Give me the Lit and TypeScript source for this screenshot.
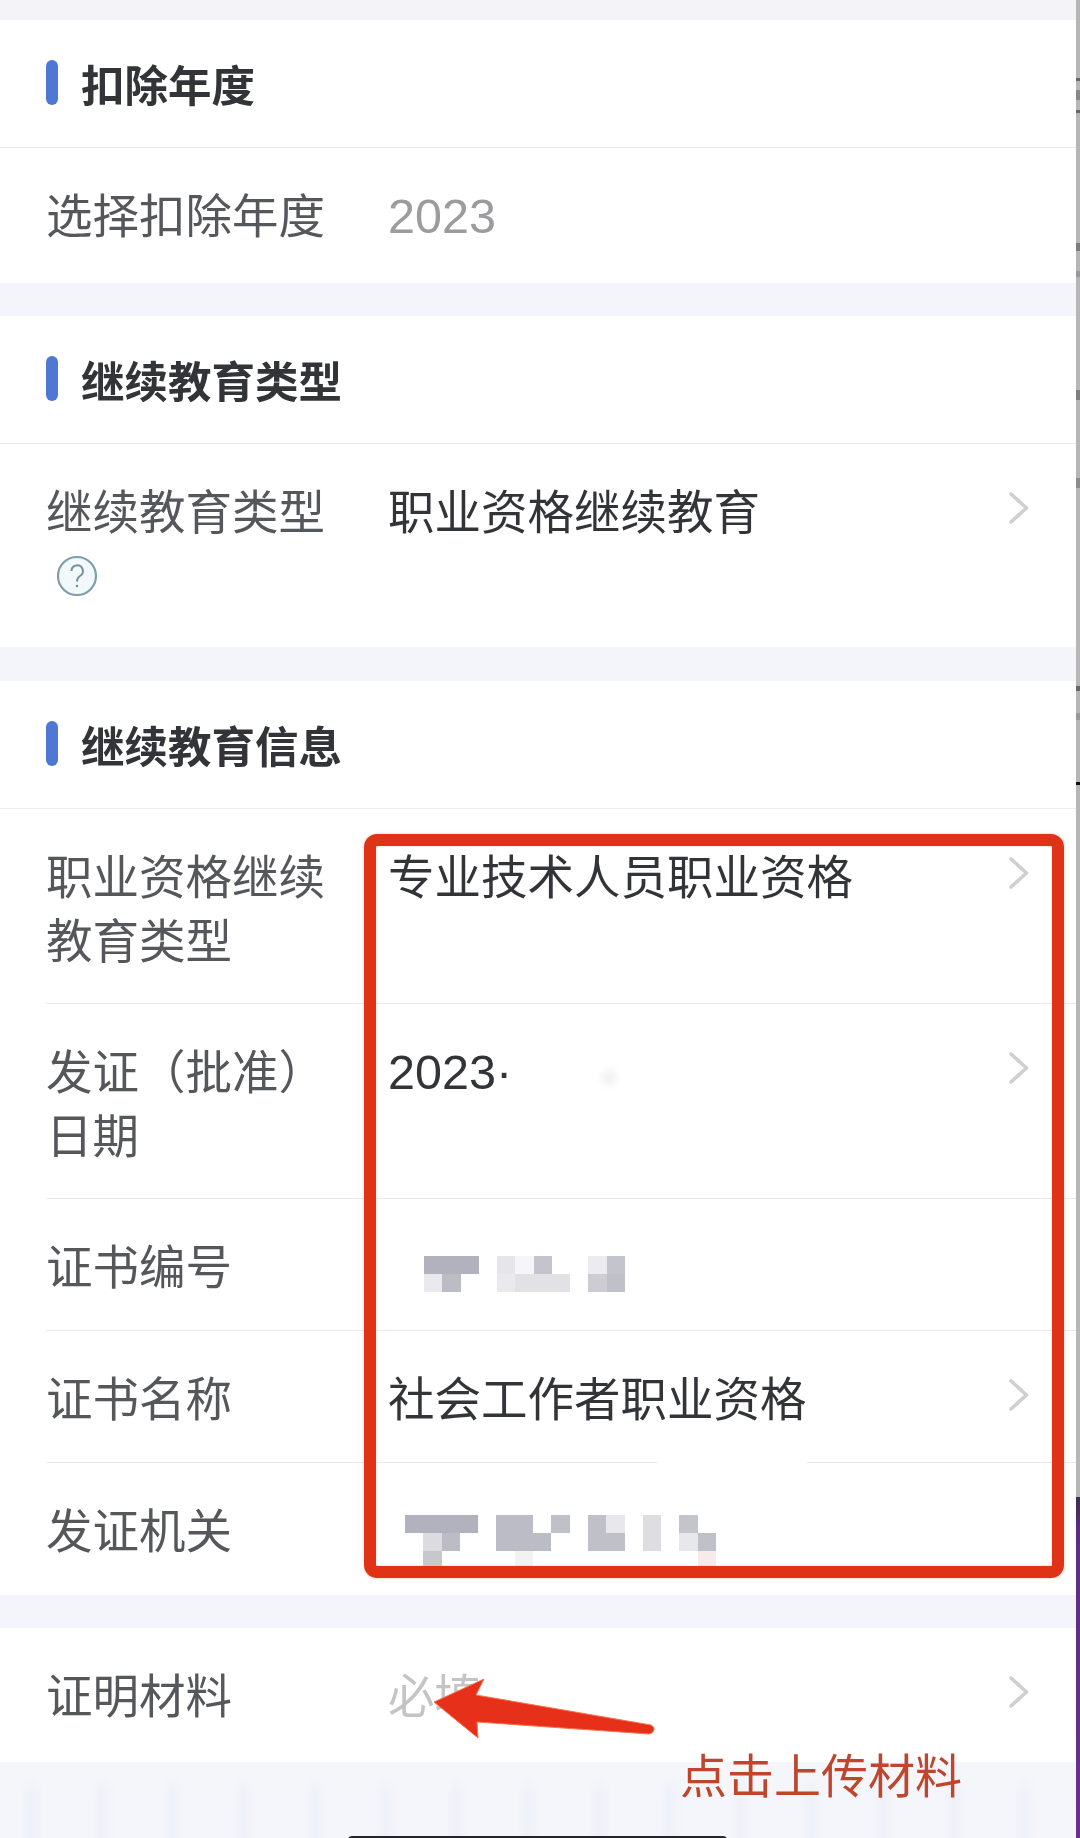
import { LitElement, html, css, svg } from "lit";
import { customElement } from "lit/decorators.js";

type Cell = string;
const D = "#b2b2be";
const M = "#bcbcc6";
const G = "#c4c4cc";
const L = "#e6e6ea";
const _ = "";

const mosaicA: Cell[][] = [
  [D, D, D, _, L, "#f6f6f8", G, _, _, "#ececf0", G],
  ["#eaeaee", M, _, _, "#eaeaee", "#e2e2e6", "#e2e2e6", "#e2e2e6", _, "#ccccd2", "#c0c0c8"],
];
const mosaicB: Cell[][] = [
  [D, D, D, D, _, M, M, _, "#c0c0c8", _, "#c0c0c8", "#e8e8ec", _, "#dedee2", _, G, _],
  [_, "#dcdce0", M, _, _, M, M, M, _, _, "#c0c0c8", "#c0c0c8", _, "#dedee2", _, "#e8e8ec", "#c0c0c8"],
  [_, "#c8c8cc", _, _, _, _, "#f2f2f2", _, _, _, _, _, _, _, _, _, "#f6eaea"],
];

const ticks: [number, number, string][] = [
  [78, 3, "#666"],
  [90, 10, "#888"],
  [110, 3, "#666"],
  [243, 8, "#7c7c7c"],
  [271, 6, "#999"],
  [390, 10, "#808080"],
  [478, 10, "#8c8c8c"],
  [686, 5, "#666"],
  [713, 7, "#999"],
  [782, 3, "#111"],
];

const chevron = html`<svg class="chev" viewBox="0 0 20 32" aria-hidden="true">
  <path d="M2 2 L17.5 16 L2 30" fill="none" stroke="#cfcfd1" stroke-width="3.6" stroke-linecap="round" stroke-linejoin="round"></path>
</svg>`;

function mosaic(rows: Cell[][], cls: string) {
  const cell = 18.3;
  const cols = rows[0].length;
  return html`<svg class="mosaic ${cls}" viewBox="0 0 ${cols * cell} ${rows.length * 18}" aria-hidden="true">
    ${rows.map((r, y) =>
      r.map((c, x) => (c ? svg`<rect x=${x * cell} y=${y * 18} width=${cell} height="18" fill=${c} shape-rendering="crispEdges"></rect>` : null))
    )}
  </svg>`;
}

@customElement("app-root")
export class AppRoot extends LitElement {
  static styles = css`
    :host {
      display: block;
      width: 1080px;
      height: 1838px;
      font-family: "Noto Sans CJK SC", "Liberation Sans", sans-serif;
    }
    .page {
      position: relative;
      width: 1080px;
      height: 1838px;
      overflow: hidden;
      background: #f4f5fa;
      display: flex;
      flex-direction: column;
    }
    .flow {
      display: flex;
      flex-direction: column;
      filter: blur(0.5px);
    }
    .card {
      background: #fff;
    }
    .top-gap { height: 20px; background: #f3f3f8; }
    .gap { height: 33px; }
    .gap-tall { height: 34px; }
    .head {
      height: 127px;
      border-bottom: 1px solid #ececee;
      display: flex;
      align-items: center;
      gap: 23px;
      padding-left: 46px;
      box-sizing: content-box;
    }
    .bar {
      width: 12px;
      height: 45px;
      border-radius: 6px;
      background: #4f78d4;
      margin-top: -3px;
    }
    .title {
      font-size: 43.5px;
      font-weight: 700;
      color: #333438;
      line-height: 64px;
    }
    .row {
      display: grid;
      grid-template-columns: 342px 1fr auto;
      padding: 33px 51px 34px 46px;
      align-items: start;
    }
    .row.two { padding-bottom: 33px; }
    .row.open { padding-bottom: 38px; }
    .row.last { padding-bottom: 35px; }
    .row.end { padding-bottom: 37px; }
    .label {
      font-size: 46.5px;
      line-height: 64px;
      color: #56575b;
    }
    .value {
      font-size: 46.5px;
      line-height: 64px;
      color: #333438;
      white-space: nowrap;
    }
    .value.compact { height: 64px; }
    .num {
      font-family: "Liberation Sans", sans-serif;
      font-size: 48.5px;
    }
    .muted { color: #9c9c9f; height: 64px; line-height: 70px; }
    .hint { color: #c4c4c6; }
    .smudge {
      display: inline-block;
      width: 26px;
      height: 26px;
      margin-left: 84px;
      vertical-align: -2px;
      background: radial-gradient(circle, #f1f1f3 0%, #ffffff 70%);
    }
    .chev {
      width: 20px;
      height: 32px;
      margin-top: 15px;
    }
    .q {
      display: block;
      width: 42px;
      height: 42px;
      margin: 14px 0 12px 10px;
    }
    .divider {
      height: 1px;
      margin-left: 46px;
      background: #e9e9ec;
    }
    .divider.erased {
      background: linear-gradient(to right, #e9e9ec 0 612px, #fff 612px 761px, #e9e9ec 761px);
    }
    .mosaic { display: block; }
    .mosaic.a { width: 201px; height: 36px; margin: 24px 0 0 36px; }
    .mosaic.b { width: 311px; height: 54px; margin: 19px 0 0 17px; }
    .tail {
      flex: 1;
      background:
        linear-gradient(to bottom, #f4f6fa 0 10px, rgba(244, 246, 250, 0) 34px),
        repeating-linear-gradient(90deg, rgba(226, 230, 242, 0) 0 20px, rgba(226, 230, 242, 0.32) 30px, rgba(226, 230, 242, 0) 44px, rgba(226, 230, 242, 0) 71px),
        #f4f6fb;
    }
    .frame {
      position: absolute;
      left: 364px;
      top: 834px;
      width: 700px;
      height: 744px;
      box-sizing: border-box;
      border: 12px solid #e03216;
      border-radius: 13px;
      box-shadow: 0 0 3px rgba(255, 170, 130, 0.7), inset 0 0 3px rgba(255, 190, 150, 0.6);
    }
    .arrow {
      position: absolute;
      left: 430px;
      top: 1675px;
      width: 230px;
      height: 68px;
    }
    .note {
      position: absolute;
      left: 680px;
      top: 1741px;
      font-size: 47px;
      line-height: 64px;
      color: #bf452c;
      white-space: nowrap;
      filter: blur(0.4px);
    }
    .home {
      position: absolute;
      left: 348px;
      top: 1836px;
      width: 379px;
      height: 6px;
      border-radius: 4px 4px 0 0;
      background: #26262a;
    }
    .strip {
      position: absolute;
      right: 0;
      top: 0;
      width: 4px;
      height: 1838px;
      background: linear-gradient(to bottom, #b6b6b6 0 1497px, #3c2c50 1497px, #5f2c82 1530px, #6c2f8e 100%);
    }
    .tick {
      position: absolute;
      left: 0;
      width: 4px;
    }
  `;

  render() {
    return html`
      <div class="page">
        <div class="flow">
          <div class="top-gap"></div>

          <section class="card">
            <div class="head"><span class="bar"></span><span class="title">扣除年度</span></div>
            <div class="row open">
              <div class="label">选择扣除年度</div>
              <div class="value num muted">2023</div>
            </div>
          </section>

          <div class="gap"></div>

          <section class="card">
            <div class="head"><span class="bar"></span><span class="title">继续教育类型</span></div>
            <div class="row open">
              <div class="label">
                继续教育类型
                <svg class="q" viewBox="0 0 42 42" aria-hidden="true">
                  <circle cx="21" cy="21" r="19" fill="#f1f9fc" stroke="#7f9eab" stroke-width="2.2"></circle>
                  <path d="M15.5 16 a5.7 5.7 0 1 1 8.5 5 c-2 1.2 -3 2.5 -3 5.5" fill="none" stroke="#7c8f98" stroke-width="2"></path>
                  <circle cx="21" cy="31" r="1.3" fill="#7c8f98"></circle>
                </svg>
              </div>
              <div class="value">职业资格继续教育</div>
              ${chevron}
            </div>
          </section>

          <div class="gap-tall"></div>

          <section class="card">
            <div class="head"><span class="bar"></span><span class="title">继续教育信息</span></div>
            <div class="row two">
              <div class="label">职业资格继续<br />教育类型</div>
              <div class="value">专业技术人员职业资格</div>
              ${chevron}
            </div>
            <div class="divider"></div>
            <div class="row two">
              <div class="label">发证（批准）<br />日期</div>
              <div class="value"><span class="num">2023·</span><span class="smudge"></span></div>
              ${chevron}
            </div>
            <div class="divider"></div>
            <div class="row">
              <div class="label">证书编号</div>
              <div class="value compact">${mosaic(mosaicA, "a")}</div>
            </div>
            <div class="divider"></div>
            <div class="row">
              <div class="label">证书名称</div>
              <div class="value">社会工作者职业资格</div>
              ${chevron}
            </div>
            <div class="divider erased"></div>
            <div class="row last">
              <div class="label">发证机关</div>
              <div class="value compact">${mosaic(mosaicB, "b")}</div>
            </div>
          </section>

          <div class="gap"></div>

          <section class="card">
            <div class="row end">
              <div class="label">证明材料</div>
              <div class="value hint">必填</div>
              ${chevron}
            </div>
          </section>
        </div>

        <div class="tail"></div>

        <div class="frame"></div>

        <svg class="arrow" viewBox="0 0 230 68" aria-hidden="true">
          <path
            d="M4 27 L54 4 L46 20 L221 50 Q225 52 224 55 Q222 59 219 59 L47 47 L48 63 Z"
            fill="#e7301a"
            stroke="#f4774f"
            stroke-width="1"
            stroke-linejoin="round"
          ></path>
        </svg>
        <div class="note">点击上传材料</div>

        <div class="home"></div>
        <div class="strip">
          ${ticks.map(
            ([y, h, c]) => html`<span class="tick" style="top:${y}px;height:${h}px;background:${c}"></span>`
          )}
        </div>
      </div>
    `;
  }
}
